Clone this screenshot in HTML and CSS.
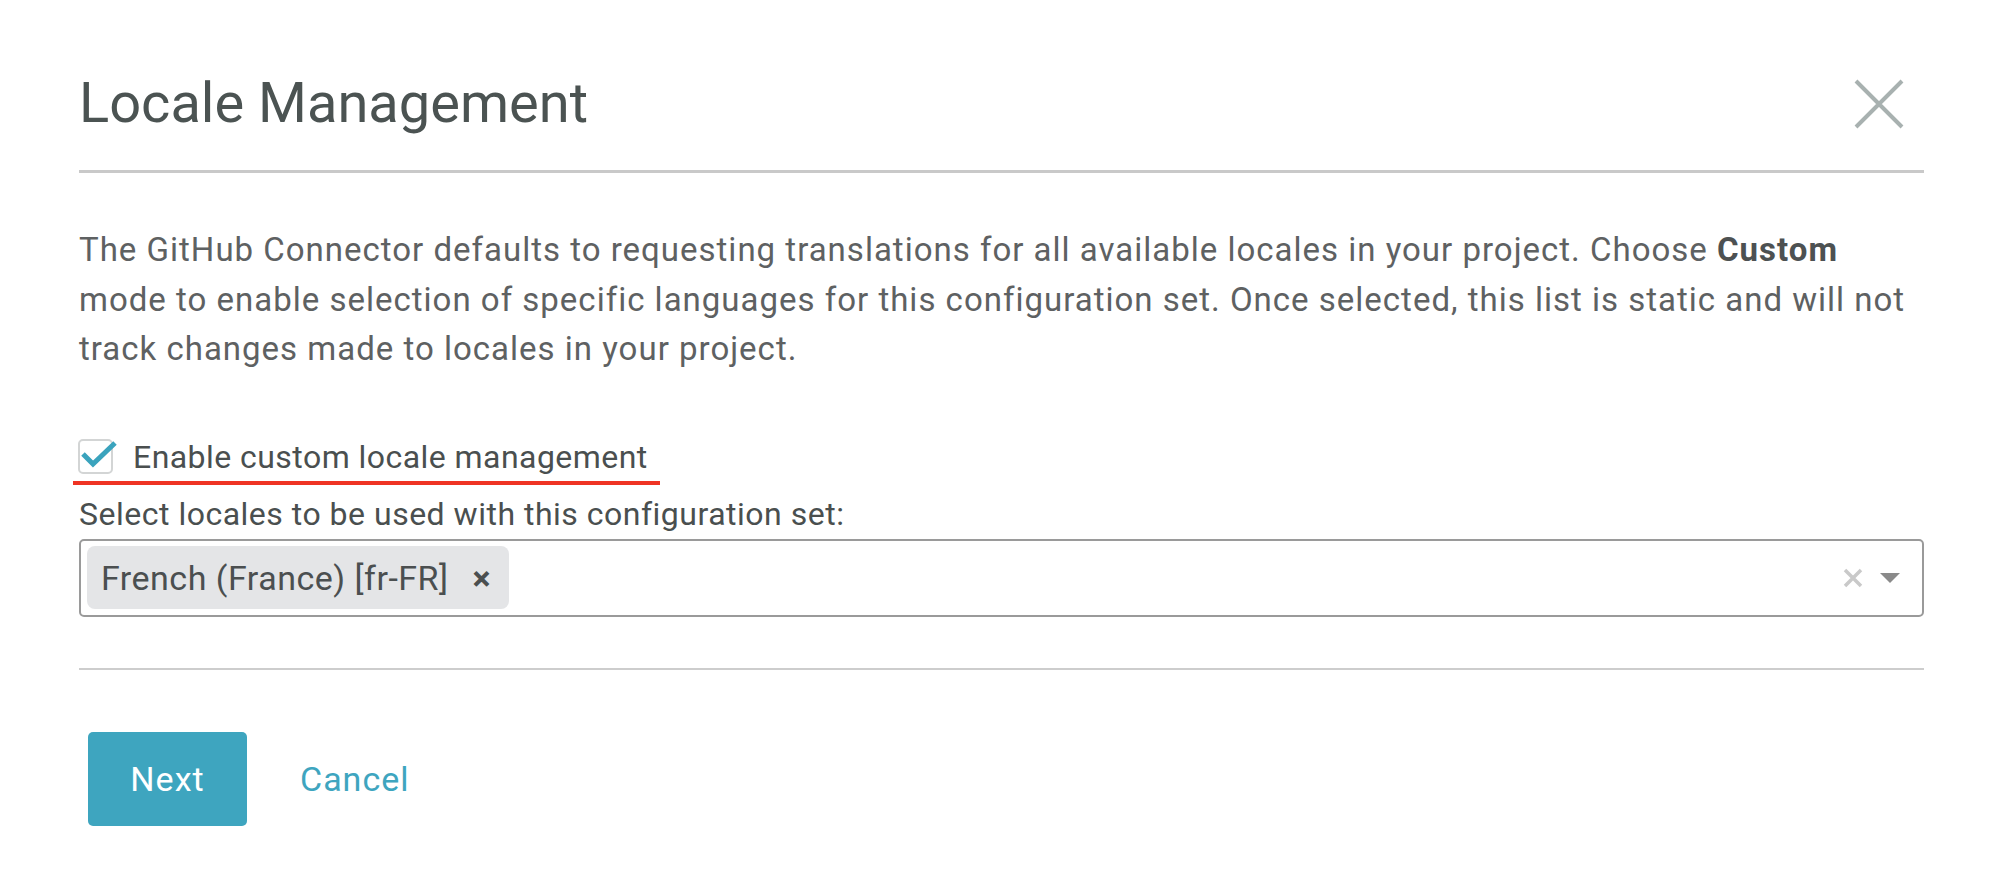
FILE: index.html
```html
<!DOCTYPE html>
<html>
  <head>
    <meta charset="utf-8" />
    <title>Locale Management</title>
    <meta name="viewport" content="width=device-width, initial-scale=1" />
    <link rel="stylesheet" href="styles.css">
  </head>
  <body>
    <div class="modal">
      <div class="modal-header">
        <h1>Locale Management</h1>
        <button type="button" class="close" aria-label="Close">
          <svg width="50" height="50" viewBox="0 0 50 50">
            <path d="M2 2 L48 48 M48 2 L2 48" stroke="#a8b1b0" stroke-width="4" fill="none" />
          </svg>
        </button>
      </div>

      <div class="modal-body">
        <p class="intro">
          The GitHub Connector defaults to requesting translations for all available locales in your project. Choose <b>Custom</b><br>
          mode to enable selection of specific languages for this configuration set. Once selected, this list is static and will not<br>
          track changes made to locales in your project.
        </p>

        <label class="check-row">
          <span class="check-box">
            <svg width="44" height="44" viewBox="0 0 44 44">
              <path d="M5 15 L15 25 L37 4" stroke="#3aa3bd" stroke-width="5" fill="none" />
            </svg>
          </span>
          <span class="check-text">Enable custom locale management</span>
        </label>

        <div class="field-label">Select locales to be used with this configuration set:</div>
        <div class="select">
          <span class="tag">French (France) [fr-FR] <span class="tag-remove">&times;</span></span>
          <span class="select-tools">
            <svg width="20" height="20" viewBox="0 0 20 20">
              <path d="M2 2 L18 18 M18 2 L2 18" stroke="#c9c9c9" stroke-width="3.5" fill="none" />
            </svg>
            <span class="caret"></span>
          </span>
        </div>
      </div>

      <div class="modal-footer">
        <button type="button" class="btn-next">Next</button>
        <a href="#" class="btn-cancel">Cancel</a>
      </div>
    </div>
  </body>
</html>
```

FILE: styles.css
```css
body {
  margin: 0;
  background: #fff;
  font-family: Roboto, "Liberation Sans", sans-serif;
  color: #5d6061;
}

.modal {
  margin: 0 87px 0 79px;
}

.modal-header {
  display: flex;
  justify-content: space-between;
  align-items: center;
  padding: 70px 0 33px 0;
  border-bottom: 3px solid #c9c9c9;
}

.modal-header h1 {
  margin: 0;
  font-size: 56px;
  line-height: 67px;
  font-weight: 400;
  color: #4b5352;
}

.close {
  background: none;
  border: none;
  padding: 0;
  margin-right: 20px;
  width: 50px;
  height: 50px;
  cursor: pointer;
}

.modal-body {
  padding-bottom: 51px;
  border-bottom: 2px solid #cdcdcd;
}

.intro {
  margin: 52px 0 0 0;
  font-size: 33px;
  letter-spacing: 1px;
  line-height: 49.6px;
  white-space: nowrap;
  color: #5e6162;
}

.intro b {
  color: #4d5152;
}

.check-row {
  display: inline-flex;
  align-items: center;
  margin: 61px 0 0 -6px;
  padding: 0 12px 2px 5px;
  height: 44px;
  border-bottom: 4px solid #ef3424;
  font-size: 32px;
  letter-spacing: 0.45px;
  color: #4a4f4f;
}

.check-box {
  position: relative;
  width: 35px;
  height: 35px;
  box-sizing: border-box;
  border: 2px solid #d3d5d5;
  border-radius: 5px;
  margin-right: 20px;
}

.check-box svg {
  position: absolute;
  left: -2px;
  top: -2px;
}

.field-label {
  margin-top: 7px;
  font-size: 32px;
  letter-spacing: 0.5px;
  line-height: 44px;
  color: #4a4f4f;
}

.select {
  display: flex;
  align-items: center;
  justify-content: space-between;
  margin-top: 3px;
  height: 78px;
  box-sizing: border-box;
  padding: 0 22px 0 6px;
  border: 2px solid #9a9a9a;
  border-radius: 5px;
}

.tag {
  display: flex;
  align-items: center;
  height: 63px;
  padding: 0 18px 0 14px;
  background: #e4e5e7;
  border-radius: 8px;
  font-size: 34px;
  letter-spacing: 0.5px;
  color: #4b4f50;
}

.tag-remove {
  margin-left: 24px;
  font-size: 34px;
  font-weight: 700;
}

.select-tools {
  display: flex;
  align-items: center;
  gap: 17px;
}

.caret {
  width: 0;
  height: 0;
  border-left: 10px solid transparent;
  border-right: 10px solid transparent;
  border-top: 10px solid #8a8a8a;
}

.modal-footer {
  display: flex;
  align-items: center;
  padding: 62px 0 0 9px;
}

.btn-next {
  width: 159px;
  height: 94px;
  border: none;
  border-radius: 5px;
  background: #3ea5bf;
  color: #fff;
  font-family: Roboto, "Liberation Sans", sans-serif;
  font-size: 34px;
  letter-spacing: 1px;
  font-weight: 400;
}

.btn-cancel {
  margin-left: 53px;
  font-size: 34px;
  letter-spacing: 1px;
  color: #3ea5bf;
  text-decoration: none;
}
```
